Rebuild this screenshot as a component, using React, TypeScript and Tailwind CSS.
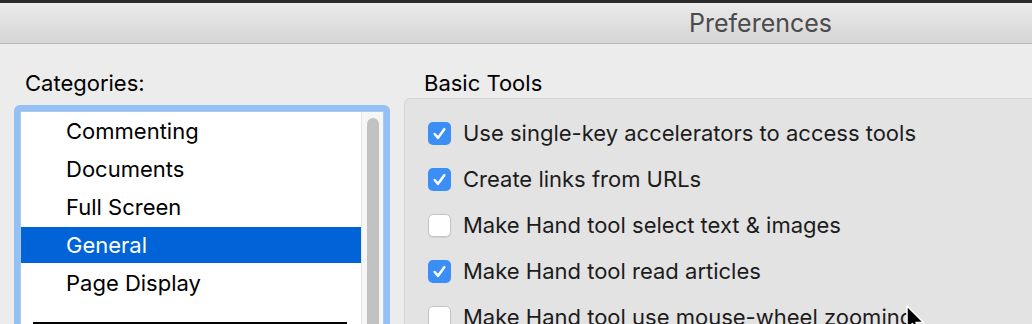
import React from 'react'

const categories = ['Commenting', 'Documents', 'Full Screen', 'General', 'Page Display']

const options = [
  { label: 'Use single-key accelerators to access tools', checked: true },
  { label: 'Create links from URLs', checked: true },
  { label: 'Make Hand tool select text & images', checked: false },
  { label: 'Make Hand tool read articles', checked: true },
  { label: 'Make Hand tool use mouse-wheel zooming', checked: false },
]

function Checkbox({ checked }: { checked: boolean }) {
  if (checked) {
    return (
      <div className="w-[23px] h-[23px] shrink-0 rounded-[5px] bg-[#3a8ef6] flex items-center justify-center">
        <svg width="23" height="23" viewBox="0 0 24 24">
          <polyline
            points="7,12.5 10.5,16.5 17,7.5"
            fill="none"
            stroke="white"
            strokeWidth="2.6"
            strokeLinecap="round"
            strokeLinejoin="round"
          />
        </svg>
      </div>
    )
  }
  return (
    <div className="w-[23px] h-[23px] shrink-0 rounded-[5px] bg-white border border-[#c4c4c4] shadow-[0_1px_1px_rgba(0,0,0,0.08)]" />
  )
}

export default function App() {
  return (
    <div className="relative w-[1032px] h-[324px] overflow-hidden bg-[#ececec] font-['Inter',sans-serif] text-[#1c1c1c]">
      {/* Window title bar */}
      <div className="h-[3px] bg-[#2b2b2b]" />
      <div className="h-[41px] bg-gradient-to-b from-[#ebebeb] to-[#d5d5d5] border-b border-[#b9b9b9] flex items-center pl-[689px]">
        <span className="text-[25px] leading-none text-[#4b4b4b]">Preferences</span>
      </div>

      <div className="flex">
        {/* Categories */}
        <div className="w-[404px] pl-[14px] shrink-0">
          <div className="mt-[27px] pl-[11px] h-[24px] text-[22px] leading-[24px] text-black">Categories:</div>
          <div className="mt-[10px] w-[376px] h-[240px] rounded-[6px] bg-[#95c0f3] p-[6px]">
            <div className="h-full bg-white border border-[#aacaef] flex overflow-hidden">
              <div className="flex-1 flex flex-col gap-[2px] pt-[1px]">
                {categories.map((c) => (
                  <div
                    key={c}
                    className={
                      c === 'General'
                        ? 'h-[36px] shrink-0 flex items-center pl-[45px] text-[22px] bg-[#0064d8] text-white'
                        : 'h-[36px] shrink-0 flex items-center pl-[45px] text-[22px] text-black'
                    }
                  >
                    {c}
                  </div>
                ))}
                <div className="mt-[19px] ml-[12px] mr-[14px] h-[4px] shrink-0 bg-black" />
              </div>
              <div className="w-[22px] shrink-0 bg-[#f6f6f6] border-l border-[#e4e4e4] pt-[6px] flex justify-center">
                <div className="w-[12px] h-[260px] rounded-full bg-[#c2c2c2]" />
              </div>
            </div>
          </div>
        </div>

        {/* Basic Tools */}
        <div className="flex-1">
          <div className="mt-[27px] pl-[20px] h-[24px] text-[22px] leading-[24px] text-black">Basic Tools</div>
          <div className="mt-[3px] w-[700px] h-[260px] rounded-[6px] bg-[#e3e3e3] border border-[#d5d5d5] pt-[11px] pl-[23px]">
            {options.map((o) => (
              <div key={o.label} className="h-[46px] flex items-center gap-[12px]">
                <Checkbox checked={o.checked} />
                <span className="text-[22px] whitespace-nowrap text-[#1c1c1c]">{o.label}</span>
              </div>
            ))}
          </div>
        </div>
      </div>

      {/* Mouse pointer */}
      <svg className="absolute left-[905px] top-[305px]" width="22" height="30" viewBox="0 0 22 30">
        <path d="M2 1 L2 24 L7.5 18.5 L11 27 L14.5 25.5 L11 17.5 L18.5 17.5 Z" fill="black" stroke="white" strokeWidth="1.5" strokeLinejoin="round" />
      </svg>
    </div>
  )
}
